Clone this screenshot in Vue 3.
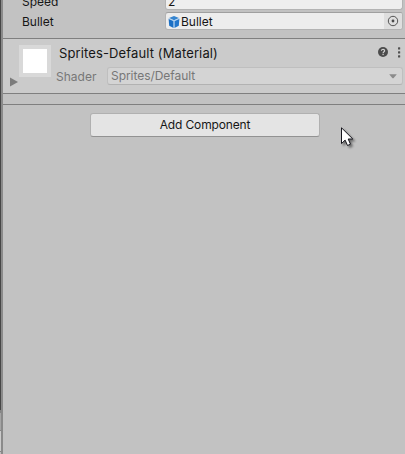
<script setup>
const fields = { speed: '2', bullet: 'Bullet' }
</script>

<template>
  <div class="window">
    <div class="edge"><i class="dark"></i><i class="tab"></i><i class="pane"></i><i class="foot"></i></div>
    <div class="splitter"></div>
    <main class="inspector">
      <section class="properties">
        <div class="row">
          <label class="label"><span class="t-speed">Speed</span></label>
          <div class="field"><span class="t-two">{{ fields.speed }}</span></div>
        </div>
        <div class="row">
          <label class="label"><span class="t-blabel">Bullet</span></label>
          <div class="field object">
            <svg class="cube" width="12" height="12" viewBox="0 0 12 12">
              <path d="M6 0 11 2 6 4.3 1 2Z" fill="#3584cf" />
              <path d="M.6 2.7 5.6 5V11.9L1.2 9.8Z" fill="#1b6fc4" />
              <path d="M11.4 2.7 6.4 5v6.9l4.4-2.1Z" fill="#2377cc" />
              <path d="M.7 2.5 6 4.9l5.3-2.4M6 4.9V11.8" fill="none" stroke="#a5cdf2" stroke-width=".8" />
            </svg>
            <span class="t-bullet">{{ fields.bullet }}</span>
            <div class="picker">
              <svg width="12" height="12" viewBox="0 0 12 12">
                <circle cx="6" cy="6" r="4.7" fill="none" stroke="#555" />
                <circle cx="6" cy="6" r="1.4" fill="#484848" />
              </svg>
            </div>
          </div>
        </div>
      </section>

      <section class="material">
        <svg class="fold" width="9" height="10" viewBox="0 0 9 10"><path d="M0 .5 8 5 0 9.5Z" fill="#7c7c7c" /></svg>
        <div class="preview"><div class="swatch"></div></div>
        <div class="info">
          <div class="title">
            <span class="t-title">Sprites-Default (Material)</span>
            <svg class="help" width="10" height="10" viewBox="0 0 11 11">
              <circle cx="5.5" cy="5.5" r="5.5" fill="#4c4c4c" />
              <path d="M3.8 4.2C3.8 1.9 7.3 2.1 7.3 4.1 7.3 5.3 5.6 5.2 5.6 6.8" fill="none" stroke="#d2d2d2" stroke-width="1.3" />
              <rect x="4.9" y="7.6" width="1.4" height="1.3" fill="#d2d2d2" />
            </svg>
            <svg class="more" width="4" height="11" viewBox="0 0 4 11">
              <g fill="#505050"><rect x="1" y="0.3" width="2.2" height="2.2" rx=".5" /><rect x="1" y="4.3" width="2.2" height="2.2" rx=".5" /><rect x="1" y="8.3" width="2.2" height="2.2" rx=".5" /></g>
            </svg>
          </div>
          <div class="shader">
            <span class="t-shader">Shader</span>
            <div class="popup">
              <span class="t-value">Sprites/Default</span>
              <svg width="8" height="5" viewBox="0 0 8 5"><path d="M.2.3H7.8L4.5 4.3h-1Z" fill="#8b8b8b" /></svg>
            </div>
          </div>
        </div>
      </section>

      <div class="gap"></div>
      <button class="add"><span class="t-add">Add Component</span></button>
    </main>

    <svg class="cursor" width="18" height="24" viewBox="0 0 18 24">
      <path d="M.5.8V16.6L4.1 13.1 6.5 18.5 9.5 17.2 7.2 12H11.8Z" fill="#fff" stroke="#15151c" stroke-width="1" />
    </svg>
  </div>
</template>

<style>
body { margin: 0; overflow: hidden; }
</style>

<style scoped>
.window {
  display: flex;
  position: relative;
  width: 405px;
  height: 454px;
  overflow: hidden;
  background: #c2c2c2;
  color: #161616;
  font: 12px/16px Inter, "Liberation Sans", sans-serif;
  white-space: nowrap;
}
.edge { display: flex; flex-direction: column; width: 1px; background: #858585; }
.dark { height: 410px; background: #464646; }
.tab { height: 17px; margin-top: 3px; background: #a5a5a5; }
.pane { height: 20px; margin-top: 1px; background: #cbcbcb; }
.foot { height: 2px; margin-top: 1px; background: #bdbdbd; }
.splitter { width: 2px; background: #8a8a8a; }
.inspector { flex: 1; min-width: 0; display: flex; flex-direction: column; }
.properties { display: flex; flex-direction: column; gap: 2px; height: 46px; margin-top: -8px; flex: none; }
.row { display: flex; height: 18px; padding-right: 2px; }
.label { width: 143px; padding: 2px 0 0 19px; }
.label span { display: block; }
.field {
  box-sizing: border-box;
  display: flex;
  flex: 1;
  align-items: center;
  border: 1px solid #b3b3b3;
  border-top-color: #a0a0a0;
  border-radius: 3px;
  background: #eee;
  padding-left: 2px;
}
.t-two, .t-bullet { padding-top: 2px; }
.object { background: #ededed; }
.cube { flex: none; margin: 1px 1px 0 0; }
.picker {
  display: flex;
  align-items: center;
  justify-content: center;
  width: 18px;
  height: 16px;
  margin-left: auto;
  border-radius: 0 2px 2px 0;
  background: #dedede;
}
.material {
  box-sizing: border-box;
  display: flex;
  flex: none;
  height: 56px;
  border-top: 1px solid #7f7f7f;
  border-bottom: 1px solid #7f7f7f;
  background: #cbcbcb;
}
.fold { margin: 38px 0 0 7px; flex: none; }
.preview { box-sizing: border-box; width: 32px; height: 32px; margin-top: 6px; padding: 4px; background: #d9d9d9; flex: none; }
.swatch { height: 24px; background: #fff; }
.info { display: flex; flex: 1; flex-direction: column; }
.title { display: flex; height: 18px; margin-top: 5px; padding: 0 4px 0 8px; align-items: center; font-size: 13px; }
.t-title { letter-spacing: .12px; }
.help { margin-left: auto; margin-right: 9px; position: relative; top: -1px; }
.more { position: relative; top: -1px; }
.shader { display: flex; height: 18px; margin-top: 5px; padding: 0 2px 0 5px; align-items: center; color: #777; }
.popup {
  box-sizing: border-box;
  display: flex;
  flex: 1;
  align-items: center;
  justify-content: space-between;
  height: 18px;
  padding: 0 5px 0 3px;
  border: 1px solid #bfbfbf;
  border-bottom-color: #b2b2b2;
  border-radius: 3px;
  background: #d4d4d4;
}
.t-shader { width: 51px; padding-top: 2px; }
.t-value { letter-spacing: -.05px; }
.gap { flex: none; height: 10px; border-bottom: 1px solid #7f7f7f; }
.add {
  box-sizing: border-box;
  width: 230px;
  height: 24px;
  margin: 8px 0 0 87px;
  padding: 0;
  border: 1px solid #b0b0b0;
  border-bottom-color: #929292;
  border-radius: 3px;
  background: #e4e4e4;
  color: #161616;
  font: inherit;
  letter-spacing: -.15px;
}
.cursor { position: absolute; left: 341px; top: 127px; filter: drop-shadow(2px 2px 1.2px rgba(0, 0, 0, .45)); }
</style>
